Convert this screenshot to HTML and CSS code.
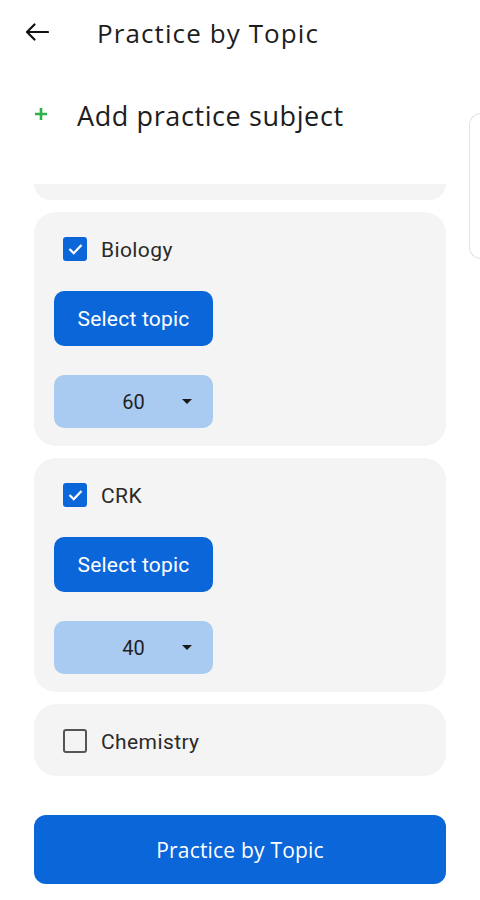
FILE: index.html
```html
<html>
    <head>
        <meta charset="utf-8">
        <link rel="stylesheet" href="styles.css">
    </head>

    <body>
        <!-- top bar -->
        <div id="topbar">
            <svg class="back" width="24" height="18" viewBox="0 0 24 18">
                <path d="M23 9H2M9.5 1.5L2 9l7.5 7.5" fill="none" stroke="#111" stroke-width="2.2" stroke-linecap="round" stroke-linejoin="round"/>
            </svg>
            <span class="title">Practice by Topic</span>
        </div>

        <div id="add">
            <svg class="plus" width="14" height="14" viewBox="0 0 14 14">
                <path d="M7 1v12M1 7h12" stroke="#2bb34a" stroke-width="2.6"/>
            </svg>
            <span>Add practice subject</span>
        </div>

        <!-- next page peeking in from the right -->
        <div id="peek"></div>

        <div id="list">
            <div class="card cut"></div>

            <div class="card">
                <div class="subject">
                    <span class="box on"><svg width="15" height="12" viewBox="0 0 15 12"><path d="M1.5 6l4.2 4.2L13.5 2" fill="none" stroke="#fff" stroke-width="2.3"/></svg></span>
                    <span class="name">Biology</span>
                </div>
                <div class="select">Select topic</div>
                <div class="count">
                    <span></span>
                    <span class="num">60</span>
                    <span class="caret"></span>
                </div>
            </div>

            <div class="card">
                <div class="subject">
                    <span class="box on"><svg width="15" height="12" viewBox="0 0 15 12"><path d="M1.5 6l4.2 4.2L13.5 2" fill="none" stroke="#fff" stroke-width="2.3"/></svg></span>
                    <span class="name">CRK</span>
                </div>
                <div class="select">Select topic</div>
                <div class="count">
                    <span></span>
                    <span class="num">40</span>
                    <span class="caret"></span>
                </div>
            </div>

            <div class="card last">
                <div class="subject">
                    <span class="box"></span>
                    <span class="name">Chemistry</span>
                </div>
            </div>
        </div>

        <div id="go">Practice by Topic</div>
    </body>
</html>
```

FILE: styles.css
```css
body {
    margin		: 0;
    width		: 480px;
    height		: 900px;
    overflow	: hidden;
    position	: relative;
    background	: #fff;
    color		: #1d1d1d;
    font-family	: "Open Sans", sans-serif;
}
#topbar {
    height		: 66px;
    display		: flex;
    align-items	: center;
    padding-left	: 25px;
}
#topbar .back {
    margin-right	: 48px;
    margin-top	: -2px;
}
#topbar .title {
    font-size	: 26px;
    letter-spacing	: 1.1px;
}
#add {
    height		: 98px;
    display		: flex;
    align-items	: center;
    padding-left	: 34px;
    font-size	: 27px;
    letter-spacing	: 0.6px;
}
#add .plus {
    margin-right	: 29px;
    margin-top	: -2px;
}
#peek {
    position	: absolute;
    left		: 469px;
    top		: 113px;
    width		: 11px;
    height		: 144px;
    border		: 1.5px solid #e4e4e4;
    border-right	: none;
    border-radius	: 14px 0 0 14px;
    background	: #fff;
}
#list {
    margin-top	: 20px;
    padding		: 0 34px;
    display		: flex;
    flex-direction	: column;
    gap		: 12px;
}
.card {
    background	: #f4f4f4;
    border-radius	: 22px;
    padding		: 25px 20px 18px;
    display		: flex;
    flex-direction	: column;
    align-items	: flex-start;
}
.card.cut {
    height		: 16px;
    padding		: 0;
    border-radius	: 0 0 22px 22px;
}
.card.last {
    padding-bottom	: 23px;
}
.subject {
    display		: flex;
    align-items	: center;
    height		: 24px;
    padding-left	: 9px;
}
.box {
    width		: 20px;
    height		: 20px;
    border		: 2px solid #555;
    border-radius	: 3px;
    margin-right	: 14px;
    display		: flex;
    align-items	: center;
    justify-content	: center;
}
.box.on {
    background	: #0b66da;
    border-color	: #0b66da;
}
.name {
    font-family	: Roboto, sans-serif;
    font-size	: 21px;
    letter-spacing	: 0.4px;
    color		: #2a2a2a;
    margin-top	: 2px;
}
.select {
    margin-top	: 30px;
    width		: 159px;
    height		: 55px;
    border-radius	: 10px;
    background	: #0b66da;
    color		: #fff;
    font-family	: Roboto, sans-serif;
    font-size	: 21px;
    letter-spacing	: 0.2px;
    display		: flex;
    align-items	: center;
    justify-content	: center;
}
.count {
    margin-top	: 29px;
    width		: 159px;
    height		: 53px;
    border-radius	: 10px;
    background	: #a9cbf1;
    display		: grid;
    grid-template-columns	: 1fr auto 1fr;
    align-items	: center;
    font-family	: Roboto, sans-serif;
    font-size	: 20px;
    color		: #222;
}
.count .caret {
    justify-self	: end;
    margin-right	: 21px;
    width		: 0;
    height		: 0;
    border-left	: 5px solid transparent;
    border-right	: 5px solid transparent;
    border-top	: 5px solid #1a1a1a;
}
#go {
    position	: absolute;
    left		: 34px;
    top		: 815px;
    width		: 412px;
    height		: 69px;
    border-radius	: 12px;
    background	: #0b66da;
    color		: #fff;
    font-size	: 21px;
    letter-spacing	: 0.2px;
    display		: flex;
    align-items	: center;
    justify-content	: center;
}
```
